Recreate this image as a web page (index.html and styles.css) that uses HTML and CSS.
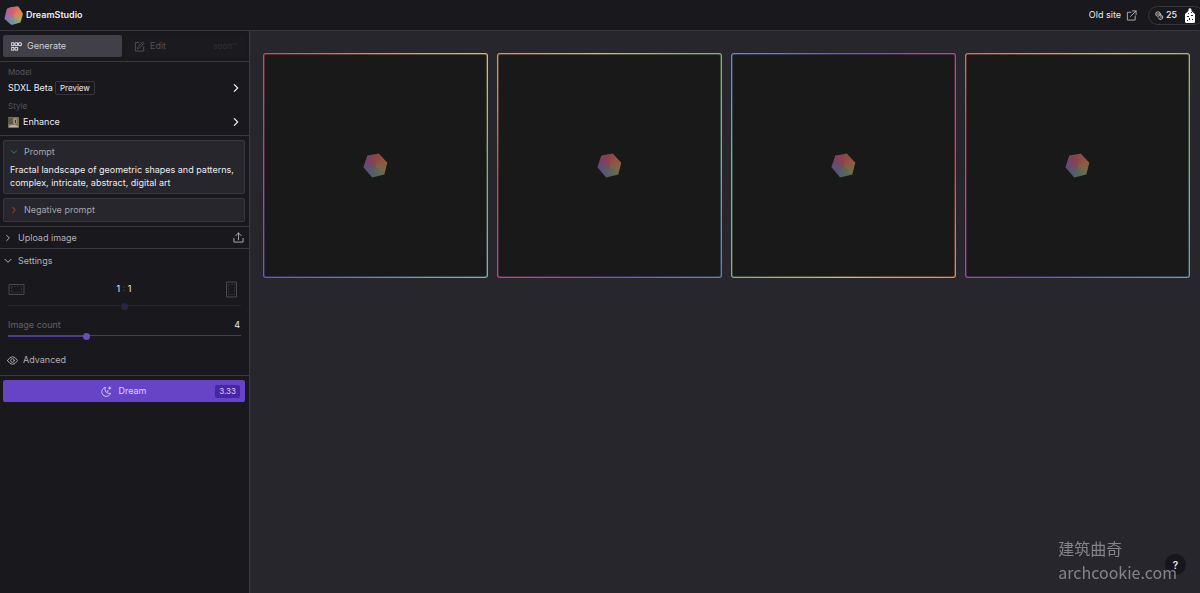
FILE: index.html
```html
<!DOCTYPE html>
<html lang="en">
<head>
<meta charset="utf-8">
<title>DreamStudio</title>
<link rel="stylesheet" href="styles.css">
</head>
<body>
<svg class="defs" aria-hidden="true">
  <defs>
    <clipPath id="gem-shape"><path d="M6.5 1.2 13.8 .3Q14.7.2 15.3.9L19.5 7.3Q20 8 19.8 8.9L17.7 16.4Q17.4 17.4 16.4 17.7L9 19.8Q8 20 7.2 19.4L1.2 14.2Q.4 13.5.6 12.5L2.8 3.6Q3 2.7 3.9 2.4Z"/></clipPath>
    <clipPath id="hex-shape"><path d="M4.3 2.6 15.8.4 24.3 9.7 21.3 21.5 9.2 24.5.4 14.3Z"/></clipPath>
  </defs>
</svg>
<div class="app">
  <header class="topbar">
    <a class="brand" href="#">
      <svg class="brand-logo" viewBox="0 0 20 20" aria-hidden="true">
        <foreignObject width="20" height="20" clip-path="url(#gem-shape)"><div class="spectrum"></div></foreignObject>
      </svg>
      DreamStudio
    </a>
    <div class="topbar-end">
      <a class="old-site" href="#">Old site
        <svg class="icon" viewBox="0 0 24 24" aria-hidden="true"><path d="M11 5H3v17h17v-9M14 2h8v8M22 2 10 14"/></svg>
      </a>
      <button class="account" type="button" aria-label="25 credits">
        <svg class="icon small" viewBox="0 0 24 24" aria-hidden="true"><circle cx="8" cy="8" r="6"/><path d="M14 10.5a6 6 0 1 1-5 8M5.5 8h5M14 16h5"/></svg>
        <span>25</span>
        <svg class="avatar" viewBox="0 0 10 15" aria-hidden="true"><path fill="#fff" d="M3.400 3V1.300L5 0l1.500 1.300V3L10 6v7.500Q10 15 8.500 15h-7Q0 15 0 13.500V6z"/><path fill="#26252b" d="M3 5h1v1H3zM6 4h1v1H6zM2 8h2v1H2zM6 7h2v1H6zM4 10h1v2H4zM7 11h1v1H7zM2 12h1v1H2z"/></svg>
      </button>
    </div>
  </header>

  <aside class="sidebar">
    <nav class="modes">
      <button class="mode active" type="button">
        <svg class="icon" viewBox="0 0 24 24" aria-hidden="true"><path d="M1.5 4h5v6h-5zM9.5 4h5v6h-5zM17.5 4h5v6h-5zM1.5 14h5v6h-5zM9.5 14h5v6h-5z"/></svg>
        Generate
      </button>
      <button class="mode" type="button" disabled>
        <svg class="icon" viewBox="0 0 24 24" aria-hidden="true"><path d="M11 3H3v19h18v-9M8 17l1-5L19 2l3 3-10 10zM16 5l3 3"/></svg>
        Edit <span class="soon">soon™</span>
      </button>
    </nav>

    <section class="pickers">
      <button class="picker" type="button">
        <span class="caption">Model</span>
        <span class="value tight">SDXL Beta <span class="tag">Preview</span>
          <svg class="icon chevron" viewBox="0 0 24 24" aria-hidden="true"><path d="m8 4 8 8-8 8"/></svg></span>
      </button>
      <button class="picker" type="button">
        <span class="caption">Style</span>
        <span class="value">
          <svg class="thumb" viewBox="0 0 11 11" aria-hidden="true"><rect width="11" height="11" rx="1" fill="#77745b"/><path d="M0 1h5v6H0z" fill="#555b43"/><path d="M5 2q2-2 4 0v4L7 8 5 6z" fill="#a78a72"/><path d="M7 3h1v3H7z" fill="#4b3028"/><path d="M1 9q4-2 9 0v1H1z" fill="#c0b69d"/></svg>
          Enhance
          <svg class="icon chevron" viewBox="0 0 24 24" aria-hidden="true"><path d="m8 4 8 8-8 8"/></svg></span>
      </button>
    </section>

    <section class="prompts">
      <div class="field">
        <label class="field-title" for="prompt">
          <svg class="icon tiny positive" viewBox="0 0 24 24" aria-hidden="true"><path d="m4 8 8 8 8-8"/></svg>Prompt</label>
        <textarea id="prompt" rows="2">Fractal landscape of geometric shapes and patterns, complex, intricate, abstract, digital art</textarea>
      </div>
      <button class="field field-title" type="button">
        <svg class="icon tiny negative" viewBox="0 0 24 24" aria-hidden="true"><path d="m8 4 8 8-8 8"/></svg>Negative prompt</button>
    </section>

    <button class="row upload" type="button">
      <svg class="icon tiny" viewBox="0 0 24 24" aria-hidden="true"><path d="m8 4 8 8-8 8"/></svg>Upload image
      <svg class="icon end" viewBox="0 0 24 24" aria-hidden="true"><path d="M2 14v8h20v-8M12 17V2M6 8l6-6 6 6"/></svg>
    </button>

    <section class="settings">
      <button class="row" type="button">
        <svg class="icon tiny" viewBox="0 0 24 24" aria-hidden="true"><path d="m3 7 9 9 9-9"/></svg>Settings</button>
      <div class="ratio">
        <svg class="frame" viewBox="0 0 17 17" aria-hidden="true"><path d="M1 3.500h15v10H1z"/><path stroke-dasharray="1 2" d="M3.500 5.500h10v6h-10z"/></svg>
        <label for="ratio">1 <span class="colon">:</span> 1</label>
        <svg class="frame" viewBox="0 0 17 17" aria-hidden="true"><path d="M3.500 1h10v15h-10z"/><path stroke-dasharray="1 2" d="M5.500 3.500h6v10h-6z"/></svg>
      </div>
      <input class="slider faint" id="ratio" type="range" min="0" max="100" value="50">
      <div class="count"><label for="count">Image count</label><output for="count">4</output></div>
      <input class="slider" id="count" type="range" min="1" max="10" value="4">
      <button class="advanced" type="button">
        <svg class="icon" viewBox="0 0 24 24" aria-hidden="true"><path d="M1 12q11-17 22 0-11 17-22 0z"/><circle cx="12" cy="12" r="4"/></svg>Advanced</button>
    </section>

    <div class="submit">
      <button class="dream" type="button">
        <svg class="icon" viewBox="0 0 24 24" aria-hidden="true"><path d="M9 3a10 10 0 1 0 12 13A10 10 0 0 1 9 3zM19 2v5M16.500 4.500h5M15 10v2"/></svg>
        Dream <span class="cost">3.33</span>
      </button>
    </div>
  </aside>

  <main class="canvas">
    <div class="tile t1"><div class="tile-body"><svg class="hex" viewBox="0 0 25 25" aria-hidden="true"><foreignObject width="25" height="25" clip-path="url(#hex-shape)"><div class="spectrum"></div></foreignObject></svg></div></div>
    <div class="tile t2"><div class="tile-body"><svg class="hex" viewBox="0 0 25 25" aria-hidden="true"><foreignObject width="25" height="25" clip-path="url(#hex-shape)"><div class="spectrum"></div></foreignObject></svg></div></div>
    <div class="tile t3"><div class="tile-body"><svg class="hex" viewBox="0 0 25 25" aria-hidden="true"><foreignObject width="25" height="25" clip-path="url(#hex-shape)"><div class="spectrum"></div></foreignObject></svg></div></div>
    <div class="tile t4"><div class="tile-body"><svg class="hex" viewBox="0 0 25 25" aria-hidden="true"><foreignObject width="25" height="25" clip-path="url(#hex-shape)"><div class="spectrum"></div></foreignObject></svg></div></div>
  </main>
  <button class="help" type="button" aria-label="Help">?</button>
  <div class="watermark"><span lang="zh">建筑曲奇</span><span>archcookie.com</span></div>
</div>
</body>
</html>
```
FILE: styles.css
```css
* { box-sizing: border-box; }
body { margin: 0; background: #27262c; color: #ececef; font: 9px/12px Inter, "Noto Sans CJK SC", sans-serif; }
button, textarea { font: inherit; color: inherit; background: none; border: 0; margin: 0; padding: 0; text-align: left; }
a { color: inherit; text-decoration: none; }
.defs { position: absolute; width: 0; height: 0; }
.app { display: grid; grid-template: 31px 1fr / 250px 1fr; min-height: 100vh; }

.icon { width: 11px; height: 11px; flex: none; fill: none; stroke: currentColor; stroke-width: 2; stroke-linejoin: round; stroke-linecap: round; }
.icon.small { width: 9px; height: 9px; }
.icon.tiny { width: 8px; height: 8px; stroke-width: 3; }

.topbar { grid-column: 1 / -1; display: flex; justify-content: space-between; align-items: center; padding-left: 4px; background: #19181d; border-bottom: 1px solid #36353c; overflow: hidden; }
.brand { display: flex; align-items: center; gap: 3px; font-weight: 600; }
.brand-logo { width: 19px; height: 19px; }
.spectrum { width: 100%; height: 100%; background: radial-gradient(circle at 50% 50%, #c9795a88, transparent 70%), conic-gradient(#de5a68, #e78060 60deg, #b7a663 110deg, #6ba394 170deg, #688bb5 210deg, #8e68c4 270deg, #c4559a 310deg, #de5a68); }
.topbar-end { display: flex; align-items: center; gap: 11px; }
.old-site { display: flex; align-items: center; gap: 5px; }
.old-site .icon { color: #b5b4ba; }
.account { display: flex; align-items: center; gap: 2px; height: 19px; width: 56px; margin-right: -4px; padding: 0 8px 0 6px; border: 1px solid #36353c; border-radius: 10px; }
.account span { font-weight: 500; }
.avatar { width: 10px; height: 15px; margin-left: auto; }

.sidebar { background: #19181d; border-right: 1px solid #3a3940; }
.modes { display: grid; grid-template-columns: 1fr 1fr; gap: 4px; padding: 4px; padding-left: 3px; border-bottom: 1px solid #3a3940; }
.mode { display: flex; align-items: center; gap: 5px; height: 22px; padding: 0 8px; border-radius: 2px; color: #505055; background: #1b1b1f; }
.mode.active { background: #414048; color: #d0cfd5; }
.mode.active .icon { color: #f0eff4; }
.soon { margin-left: auto; font-size: 8px; color: #323237; }

.pickers { display: grid; gap: 4px; padding: 4px 8px 5px; border-bottom: 1px solid #3a3940; }
.picker { display: grid; gap: 2px; }
.caption { font-size: 8px; color: #56555b; }
.value { display: flex; align-items: center; gap: 4px; height: 16px; }
.value.tight { gap: 2px; }
.tag { padding: 0 4px; border: 1px solid #36353c; border-radius: 2px; font-size: 8px; }
.thumb { width: 11px; height: 11px; }
.chevron { margin-left: auto; width: 10px; height: 10px; stroke-width: 3; }

.prompts { display: grid; gap: 4px; padding: 4px 4px 4px 3px; border-bottom: 1px solid #3a3940; }
.field { display: block; background: #27262c; border: 1px solid #38373e; border-radius: 2px; }
.field-title { display: flex; align-items: center; gap: 6px; height: 24px; padding-left: 6px; color: #a6a5ab; }
.field > .field-title { height: 22px; }
.field textarea { display: block; width: 100%; height: 30px; padding: 0 6px 4px; line-height: 13px; resize: none; overflow: hidden; outline: 0; }
.positive { color: #3f7a5a; }
.negative { color: #b8443a; }

.row { display: flex; align-items: center; gap: 6px; width: 100%; height: 22px; padding: 0 5px 0 4px; color: #b1b0b6; }
.upload { border-bottom: 1px solid #3a3940; }
.end { margin-left: auto; }
.settings { padding: 1px 0 9px; border-bottom: 1px solid #3a3940; }
.ratio { display: flex; justify-content: space-between; align-items: center; height: 18px; margin: 8px 9px 0 8px; }
.frame { width: 17px; height: 17px; fill: none; stroke: #49484f; }
.colon { color: #56555b; }
.slider { --thumb: #6950b8; appearance: none; display: block; width: calc(100% - 16px); height: 8px; margin: 0 8px; background: linear-gradient(#4f3a9c, #4f3a9c) 0 3px / 34% 2px no-repeat, linear-gradient(#44434a, #44434a) 0 3px / 100% 1px no-repeat; }
.slider::-webkit-slider-thumb { appearance: none; width: 7px; height: 7px; border-radius: 50%; background: var(--thumb); }
.slider.faint { --thumb: #2a2545; margin-top: 4px; background: linear-gradient(#26252a, #26252a) 0 3px / 100% 1px no-repeat; }
.count { display: flex; justify-content: space-between; padding: 9px 9px 1px 8px; color: #626167; }
.count output { color: #ececef; }
.advanced { display: flex; align-items: center; gap: 5px; margin: 14px 7px 0; color: #b1b0b6; }

.submit { padding: 4px 4px 4px 3px; }
.dream { display: grid; grid-template-columns: 1fr auto auto 1fr; align-items: center; gap: 6px; width: 100%; height: 22px; padding: 0 5px; border-radius: 2px; background: #6744c6; color: #ddd4fb; }
.dream .icon { grid-column: 2; }
.cost { justify-self: end; padding: 0 4px; border-radius: 2px; background: #4825a5; font-size: 8px; line-height: 13px; }

.canvas { display: grid; grid-template-columns: repeat(4, 1fr); gap: 9px; align-items: start; padding: 22px 10px 22px 13px; }
.tile { display: grid; aspect-ratio: 1; padding: 2px; border-radius: 3px; background: conic-gradient(from var(--start), #e04252, #e88c54, #d6be62, #80b868, #6cbcaa, #5c88d6, #7050d8, #c04098, #e04252); }
.tile-body { display: grid; place-items: center; border-radius: 1px; background: #19191a; box-shadow: 0 0 0 1px #19191aaa; }
.t1 { --start: 315deg; }
.t2 { --start: 265deg; }
.t3 { --start: 90deg; }
.t4 { --start: 290deg; }
.hex { width: 25px; height: 25px; opacity: .6; }

.help { position: fixed; right: 14px; bottom: 18px; width: 21px; height: 21px; border-radius: 50%; background: #17161b; text-align: center; font-weight: 600; font-size: 10px; }
.watermark { position: fixed; right: 23px; bottom: 9px; display: grid; color: #858489; font: 16px/24px "Noto Sans CJK SC", sans-serif; pointer-events: none; }
```
